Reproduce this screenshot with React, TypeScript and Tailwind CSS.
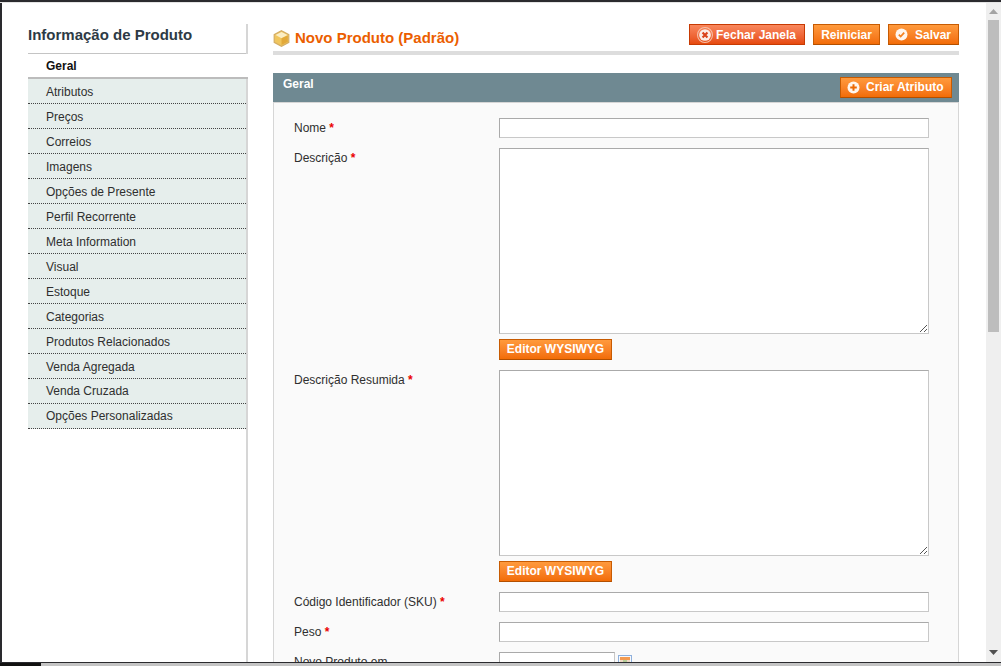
import type { ReactNode } from 'react';

const tabs = [
  'Atributos',
  'Preços',
  'Correios',
  'Imagens',
  'Opções de Presente',
  'Perfil Recorrente',
  'Meta Information',
  'Visual',
  'Estoque',
  'Categorias',
  'Produtos Relacionados',
  'Venda Agregada',
  'Venda Cruzada',
  'Opções Personalizadas'
];

function OrangeButton({ className, children }: { className: string; children: ReactNode }) {
  return (
    <button
      className={`flex h-[21px] items-center border border-[#c75b02] border-b-[#b34f00] bg-gradient-to-b from-[#ff9a3c] to-[#f26c05] text-[12px] font-bold text-[#fff] ${className}`}
    >
      {children}
    </button>
  );
}

function Label({ text }: { text: string }) {
  return (
    <div className="w-[225px] pl-[20px] pt-[2px] text-[12px] leading-[16px] text-[#2f2f2f]">
      {text} <span className="font-bold text-[#eb0000]">*</span>
    </div>
  );
}

function FieldInput() {
  return <div className="h-[20px] w-[430px] border border-t-[#aaaaaa] border-l-[#aaaaaa] border-r-[#c8c8c8] border-b-[#c8c8c8] bg-white" />;
}

function FieldArea() {
  return (
    <div>
      <div className="relative h-[186px] w-[430px] border border-t-[#aaaaaa] border-l-[#aaaaaa] border-r-[#c8c8c8] border-b-[#c8c8c8] bg-white">
        <svg className="absolute bottom-0 right-0" width="10" height="10" viewBox="0 0 10 10">
          <path d="M2 9 9 2M6 9 9 6" stroke="#555555" strokeWidth="1" />
        </svg>
      </div>
      <OrangeButton className="mt-[5px] w-[113px] justify-center pb-[2px]">Editor WYSIWYG</OrangeButton>
    </div>
  );
}

export default function App() {
  return (
    <div className="flex h-[666px] w-[1001px] flex-col overflow-hidden bg-white font-['Liberation_Sans',sans-serif]">
      <div className="h-[3px] shrink-0 border-t-[2px] border-[#2a2a2e] bg-[#e4e4e4]" />

      <div className="flex min-h-0 flex-1">
        <div className="w-[2px] shrink-0 bg-[#2a2a2e]" />

        <div className="flex min-w-0 flex-1 overflow-hidden pl-[26px] pt-[21px]">
          <aside className="w-[220px] shrink-0 border-r-2 border-[#d6d6d6]">
            <h3 className="h-[30px] border-b border-[#c4c4c4] pt-[2px] text-[15px] font-bold leading-[18px] text-[#2d3a45]">
              Informação de Produto
            </h3>
            <div className="mr-[-2px] h-[25px] border-b-2 border-[#bcbcbc] bg-white pl-[18px] pt-[4px] text-[12px] font-bold leading-[16px] text-[#111111]">
              Geral
            </div>
            {tabs.map((tab, index) => (
              <div
                key={tab}
                className={`h-[25px] border-b border-dotted border-[#444444] bg-[#e6eeec] pl-[18px] text-[12px] leading-[16px] text-[#2f2f2f] ${index > 11 ? 'pt-[4px]' : 'pt-[5px]'}`}
              >
                {tab}
              </div>
            ))}
          </aside>

          <main className="ml-[25px] w-[686px] shrink-0">
            <div className="flex h-[31px] items-start justify-between border-b-4 border-[#dddddd]">
              <h3 className="flex items-center gap-[5px] pt-[5px] text-[15px] font-bold leading-[18px] text-[#eb5e00]">
                <svg width="17" height="17" viewBox="0 0 17 17">
                  <path d="M8.5 .8 15.8 4.7V12.3L8.5 16.2 1.2 12.3V4.7Z" fill="#f0c65e" stroke="#d4ad62" strokeWidth="1.2" />
                  <path d="M2.5 5 8.5 1.9 14.5 5 8.5 8.2Z" fill="#fbeec5" />
                  <path d="M8.5 8.2V15 L14.8 11.7V5.4Z" fill="#e2a93a" />
                </svg>
                Novo Produto (Padrão)
              </h3>
              <div className="flex gap-[8px]">
                <button className="flex h-[21px] w-[116px] items-center border border-[#c73a03] bg-gradient-to-b from-[#f9875c] to-[#e64a0c] pl-[7px] text-[12px] font-bold text-white">
                  <svg className="mr-[3px]" width="16" height="16" viewBox="0 0 15 15">
                    <circle cx="7.5" cy="7.5" r="7" fill="none" stroke="#f7c0a8" strokeWidth="1" />
                    <circle cx="7.5" cy="7.5" r="5.5" fill="#fbeee8" />
                    <path d="M5.2 5.2 9.8 9.8M9.8 5.2 5.2 9.8" stroke="#d9431a" strokeWidth="2" />
                  </svg>
                  Fechar Janela
                </button>
                <OrangeButton className="w-[67px] justify-center">Reiniciar</OrangeButton>
                <OrangeButton className="w-[71px] pl-[6px]">
                  <svg className="mr-[7px]" width="13" height="13" viewBox="0 0 13 13">
                    <circle cx="6.5" cy="6.5" r="6" fill="#fff6ee" />
                    <path d="M3.8 6.6 5.7 8.6 9.2 4.6" fill="none" stroke="#f58220" strokeWidth="1.7" />
                  </svg>
                  Salvar
                </OrangeButton>
              </div>
            </div>

            <div className="mt-[18px] flex h-[30px] items-start justify-between border-b border-[#d6d6d6] bg-[#6f8992] pl-[10px] pr-[7px]">
              <span className="pt-[3px] text-[12px] font-bold leading-[16px] text-white">Geral</span>
              <OrangeButton className="mt-[4px] w-[112px] pl-[6px] pb-[2px]">
                <svg className="mr-[6px] mt-[2px]" width="13" height="13" viewBox="0 0 13 13">
                  <circle cx="6.5" cy="6.5" r="6" fill="#fff6ee" />
                  <path d="M6.5 3.2V9.8M3.2 6.5H9.8" stroke="#ec6a05" strokeWidth="2" />
                </svg>
                Criar Atributo
              </OrangeButton>
            </div>

            <div className="flex flex-col gap-[10px] border-x border-[#d6d6d6] bg-[#fafafa] pb-[40px] pt-[15px]">
              <div className="flex">
                <Label text="Nome" />
                <FieldInput />
              </div>
              <div className="flex">
                <Label text="Descrição" />
                <FieldArea />
              </div>
              <div className="flex">
                <Label text="Descrição Resumida" />
                <FieldArea />
              </div>
              <div className="flex">
                <Label text="Código Identificador (SKU)" />
                <FieldInput />
              </div>
              <div className="flex">
                <Label text="Peso" />
                <FieldInput />
              </div>
              <div className="flex">
                <div className="w-[225px] pl-[20px] pt-[2px] text-[12px] leading-[16px] text-[#2f2f2f]">Novo Produto em</div>
                <div className="h-[20px] w-[116px] border border-t-[#aaaaaa] border-l-[#aaaaaa] border-r-[#c8c8c8] border-b-[#c8c8c8] bg-white" />
                <svg className="ml-[3px] mt-[3px]" width="14" height="14" viewBox="0 0 14 14">
                  <rect x="0.5" y="0.5" width="13" height="13" fill="#f7f9fc" stroke="#8fb0dc" />
                  <rect x="2" y="2" width="10" height="3" fill="#f39a50" />
                  <path d="M2 6H12" stroke="#e8b98e" strokeWidth="1" />
                  <path d="M5 6H9" stroke="#7cbf6a" strokeWidth="1" />
                </svg>
              </div>
            </div>
          </main>
        </div>

        <div className="flex w-[15px] shrink-0 flex-col items-center bg-[#efefef]">
          <svg className="mt-[6px] shrink-0" width="9" height="6" viewBox="0 0 9 6">
            <path d="M4.5 0 9 5H0Z" fill="#a3a3a3" />
          </svg>
          <div className="mt-[5px] h-[312px] w-[11px] shrink-0 bg-[#bdbdbd]" />
          <svg className="mt-auto mb-[6px] shrink-0" width="9" height="6" viewBox="0 0 9 6">
            <path d="M4.5 5 9 0H0Z" fill="#505050" />
          </svg>
        </div>
      </div>

      <div className="flex h-[4px] shrink-0 border-t border-[#2a2a2e] bg-[#c4c4c4]">
        <div className="w-[41px] bg-[#111111]" />
      </div>
    </div>
  );
}
